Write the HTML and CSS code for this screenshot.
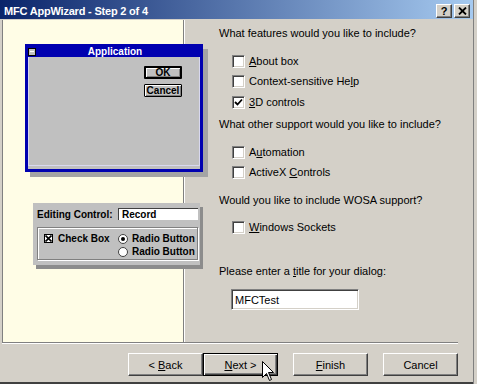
FILE: index.html
```html
<!DOCTYPE html>
<html lang="en">
<head>
  <meta charset="UTF-8" />
  <title>MFC AppWizard - Step 2 of 4</title>
  <link rel="stylesheet" href="styles.css">
</head>
<body>

  <div class="window">
    <div class="titlebar">
      <span class="caption">MFC AppWizard - Step 2 of 4</span>
      <div class="caption-buttons">
        <span class="cap-btn">?</span>
        <span class="cap-btn">
          <svg width="9" height="8" viewBox="0 0 9 8"><path d="M1 0.5 L8 7.5 M8 0.5 L1 7.5" stroke="#000" stroke-width="1.8"/></svg>
        </span>
      </div>
    </div>

    <div class="main">
      <!-- preview of the dialog being generated -->
      <div class="art">
        <div class="mock-app">
          <div class="mock-title">
            <span class="mock-sys"></span>
            <span class="mock-caption">Application</span>
          </div>
          <div class="mock-body">
            <span class="mock-btn default">OK</span>
            <span class="mock-btn">Cancel</span>
          </div>
        </div>

        <div class="mock-panel">
          <div class="mock-edit-row">
            <span>Editing Control:</span>
            <span class="mock-edit">Record</span>
          </div>
          <div class="mock-group">
            <div class="mock-check">
              <span class="mock-cbox">
                <svg width="7" height="7" viewBox="0 0 7 7"><path d="M0.5 0.5 L6.5 6.5 M6.5 0.5 L0.5 6.5" stroke="#000" stroke-width="1.6"/></svg>
              </span>
              Check Box
            </div>
            <div class="mock-radios">
              <div class="mock-radio"><span class="dot on"></span>Radio Button</div>
              <div class="mock-radio"><span class="dot"></span>Radio Button</div>
            </div>
          </div>
        </div>
      </div>

      <div class="options">
        <div class="question q1">What features would you like to include?</div>
        <label class="check first"><span class="box"></span><span><u>A</u>bout box</span></label>
        <label class="check"><span class="box"></span><span>Context-sensitive He<u>l</u>p</span></label>
        <label class="check third">
          <span class="box">
            <svg width="9" height="9" viewBox="0 0 9 9"><path d="M1 4 L3.5 6.5 L8 1.5" fill="none" stroke="#000" stroke-width="1.8"/></svg>
          </span>
          <span><u>3</u>D controls</span>
        </label>

        <div class="question q2">What other support would you like to include?</div>
        <label class="check first"><span class="box"></span><span>A<u>u</u>tomation</span></label>
        <label class="check"><span class="box"></span><span>ActiveX <u>C</u>ontrols</span></label>

        <div class="question q3">Would you like to include WOSA support?</div>
        <label class="check sockets"><span class="box"></span><span><u>W</u>indows Sockets</span></label>

        <div class="question q4">Please enter a <u>t</u>itle for your dialog:</div>
        <div class="textfield">MFCTest</div>
      </div>
    </div>

    <div class="separator"></div>

    <div class="footer">
      <button class="btn">&lt; <u>B</u>ack</button>
      <button class="btn default"><u>N</u>ext &gt;</button>
      <button class="btn finish"><u>F</u>inish</button>
      <button class="btn cancel">Cancel</button>
    </div>

    <svg class="cursor" width="13" height="21" viewBox="0 0 13 21">
      <path d="M0.5 0.5 L0.5 16.5 L4.5 12.5 L7.5 19.5 L9.5 18.5 L6.5 11.5 L11.5 11.5 Z" fill="#fff" stroke="#000" stroke-width="1"/>
    </svg>
  </div>

</body>
</html>
```

FILE: styles.css
```css
* {
  box-sizing: border-box;
}

body {
  margin: 0;
  background: #d4d0c8;
  font-family: 'Liberation Sans', Arial, sans-serif;
  font-size: 11px;
  color: #000;
}

.window {
  position: relative;
  width: 477px;
  height: 384px;
  padding-right: 4px;
  background: #d4d0c8;
  overflow: hidden;
  box-shadow: inset -3px 0 0 #d4d0c8, inset -4px 0 0 #808080, inset 0 -2px 0 #404040;
}

.titlebar {
  height: 19px;
  display: flex;
  align-items: center;
  padding: 2px 3px 0 4px;
  background: linear-gradient(to right, #0a246a, #a6caf0);
}

.caption {
  color: #fff;
  font-weight: 700;
  font-size: 11px;
  letter-spacing: -0.2px;
}

.caption-buttons {
  margin-left: auto;
  display: flex;
  gap: 2px;
}

.cap-btn {
  width: 16px;
  height: 14px;
  display: flex;
  align-items: center;
  justify-content: center;
  background: #d4d0c8;
  font-weight: 700;
  font-size: 11px;
  border-top: 1px solid #fff;
  border-left: 1px solid #fff;
  border-right: 1px solid #404040;
  border-bottom: 1px solid #404040;
  box-shadow: inset -1px -1px 0 #808080;
}

.main {
  display: flex;
  height: 322px;
  margin-top: 1px;
  padding-left: 2px;
}

/* left illustration */
.art {
  position: relative;
  z-index: 1;
  width: 182px;
  flex-shrink: 0;
  background: #fffde6;
  border-left: 1px solid #808080;
  border-right: 1px solid #808080;
  box-shadow: 1px 0 0 #fff;
  padding-top: 24px;
}

.mock-app {
  width: 178px;
  height: 128px;
  margin-left: 22px;
  border: 3px solid #0000b0;
  background: #c0c0c0;
  box-shadow: 5px 5px 0 #a4a4a4;
  font-weight: 700;
  font-size: 10px;
}

.mock-title {
  height: 10px;
  background: #0000b0;
  display: flex;
  align-items: center;
  position: relative;
}

.mock-sys {
  width: 8px;
  height: 8px;
  background: #c0c0c0;
  border: 1px solid #000;
  position: relative;
}

.mock-sys::after {
  content: "";
  position: absolute;
  left: 1px;
  top: 2px;
  width: 4px;
  height: 1px;
  background: #fff;
}

.mock-caption {
  flex: 1;
  text-align: center;
  color: #fff;
  line-height: 10px;
  padding-right: 6px;
}

.mock-body {
  display: flex;
  flex-direction: column;
  align-items: flex-end;
  gap: 5px;
  padding: 9px 17px 0 0;
  height: 109px;
  border: 1px solid #d8d8f0;
  border-top: none;
}

.mock-btn {
  width: 38px;
  height: 13px;
  display: flex;
  align-items: center;
  justify-content: center;
  background: #c0c0c0;
  border: 1px solid #000;
  border-radius: 1px;
  box-shadow: inset 1px 1px 0 #fff, inset -1px -1px 0 #808080;
  line-height: 10px;
}

.mock-btn.default {
  border-width: 2px;
}

.mock-panel {
  width: 167px;
  height: 62px;
  margin: 31px 0 0 30px;
  background: #c0c0c0;
  box-shadow: 3px 4px 0 #8c8c8c;
  padding: 5px 2px 0 4px;
  font-weight: 700;
  font-size: 10px;
}

.mock-edit-row {
  display: flex;
  align-items: center;
  justify-content: space-between;
  height: 12px;
}

.mock-edit {
  width: 80px;
  height: 12px;
  background: #fff;
  border-top: 1px solid #404040;
  border-left: 1px solid #404040;
  padding-left: 3px;
  line-height: 11px;
}

.mock-group {
  height: 33px;
  margin-top: 7px;
  display: flex;
  border: 1px solid #808080;
  box-shadow: inset 1px 1px 0 #fff, 1px 1px 0 #fff;
  padding: 6px 0 0 6px;
}

.mock-check {
  display: flex;
  align-items: flex-start;
  gap: 5px;
  width: 74px;
  line-height: 10px;
}

.mock-cbox {
  width: 9px;
  height: 9px;
  background: #fff;
  border: 1px solid #000;
  display: flex;
  align-items: center;
  justify-content: center;
}

.mock-radios {
  display: flex;
  flex-direction: column;
  gap: 3px;
}

.mock-radio {
  display: flex;
  align-items: center;
  gap: 4px;
  line-height: 10px;
}

.dot {
  width: 10px;
  height: 10px;
  border-radius: 50%;
  background: #fff;
  border: 1px solid #404040;
  position: relative;
}

.dot.on::after {
  content: "";
  position: absolute;
  left: 2px;
  top: 2px;
  width: 4px;
  height: 4px;
  border-radius: 50%;
  background: #000;
}

/* right side options */
.options {
  flex: 1;
  padding: 6px 0 0 35px;
}

.question {
  line-height: 14px;
  height: 14px;
}

.q2 { margin-top: 5px; }
.q3 { margin-top: 11px; }
.q4 { margin-top: 27px; }

.check {
  display: flex;
  align-items: center;
  gap: 4px;
  height: 20px;
  margin-left: 13px;
}

.check.first { margin-top: 11px; }
.check.third { margin-top: 1px; }
.check.sockets { margin-top: 10px; }

.box {
  width: 13px;
  height: 13px;
  background: #fff;
  border-top: 1px solid #808080;
  border-left: 1px solid #808080;
  border-right: 1px solid #fff;
  border-bottom: 1px solid #fff;
  box-shadow: inset 1px 1px 0 #404040, inset -1px -1px 0 #d4d0c8;
  display: flex;
  align-items: center;
  justify-content: center;
}

.textfield {
  width: 128px;
  height: 21px;
  margin: 11px 0 0 12px;
  background: #fff;
  border-top: 1px solid #808080;
  border-left: 1px solid #808080;
  border-right: 1px solid #fff;
  border-bottom: 1px solid #fff;
  box-shadow: inset 1px 1px 0 #404040, inset -1px -1px 0 #d4d0c8;
  padding: 3px 0 0 3px;
  line-height: 14px;
}

.separator {
  height: 2px;
  margin-left: 2px;
  width: 456px;
  border-top: 1px solid #808080;
  border-bottom: 1px solid #fff;
}

.footer {
  display: flex;
  justify-content: flex-end;
  padding: 9px 15px 0 0;
}

.btn {
  width: 75px;
  height: 23px;
  padding: 0;
  font-family: inherit;
  font-size: 11px;
  color: #000;
  background: #d4d0c8;
  border-top: 1px solid #fff;
  border-left: 1px solid #fff;
  border-right: 1px solid #404040;
  border-bottom: 1px solid #404040;
  box-shadow: inset -1px -1px 0 #808080;
}

.btn.default {
  border: 1px solid #000;
  box-shadow: inset 1px 1px 0 #fff, inset -1px -1px 0 #404040, inset -2px -2px 0 #808080;
}

.btn.finish { margin-left: 15px; }
.btn.cancel { margin-left: 15px; }

.cursor {
  position: absolute;
  left: 262px;
  top: 361px;
}
```
